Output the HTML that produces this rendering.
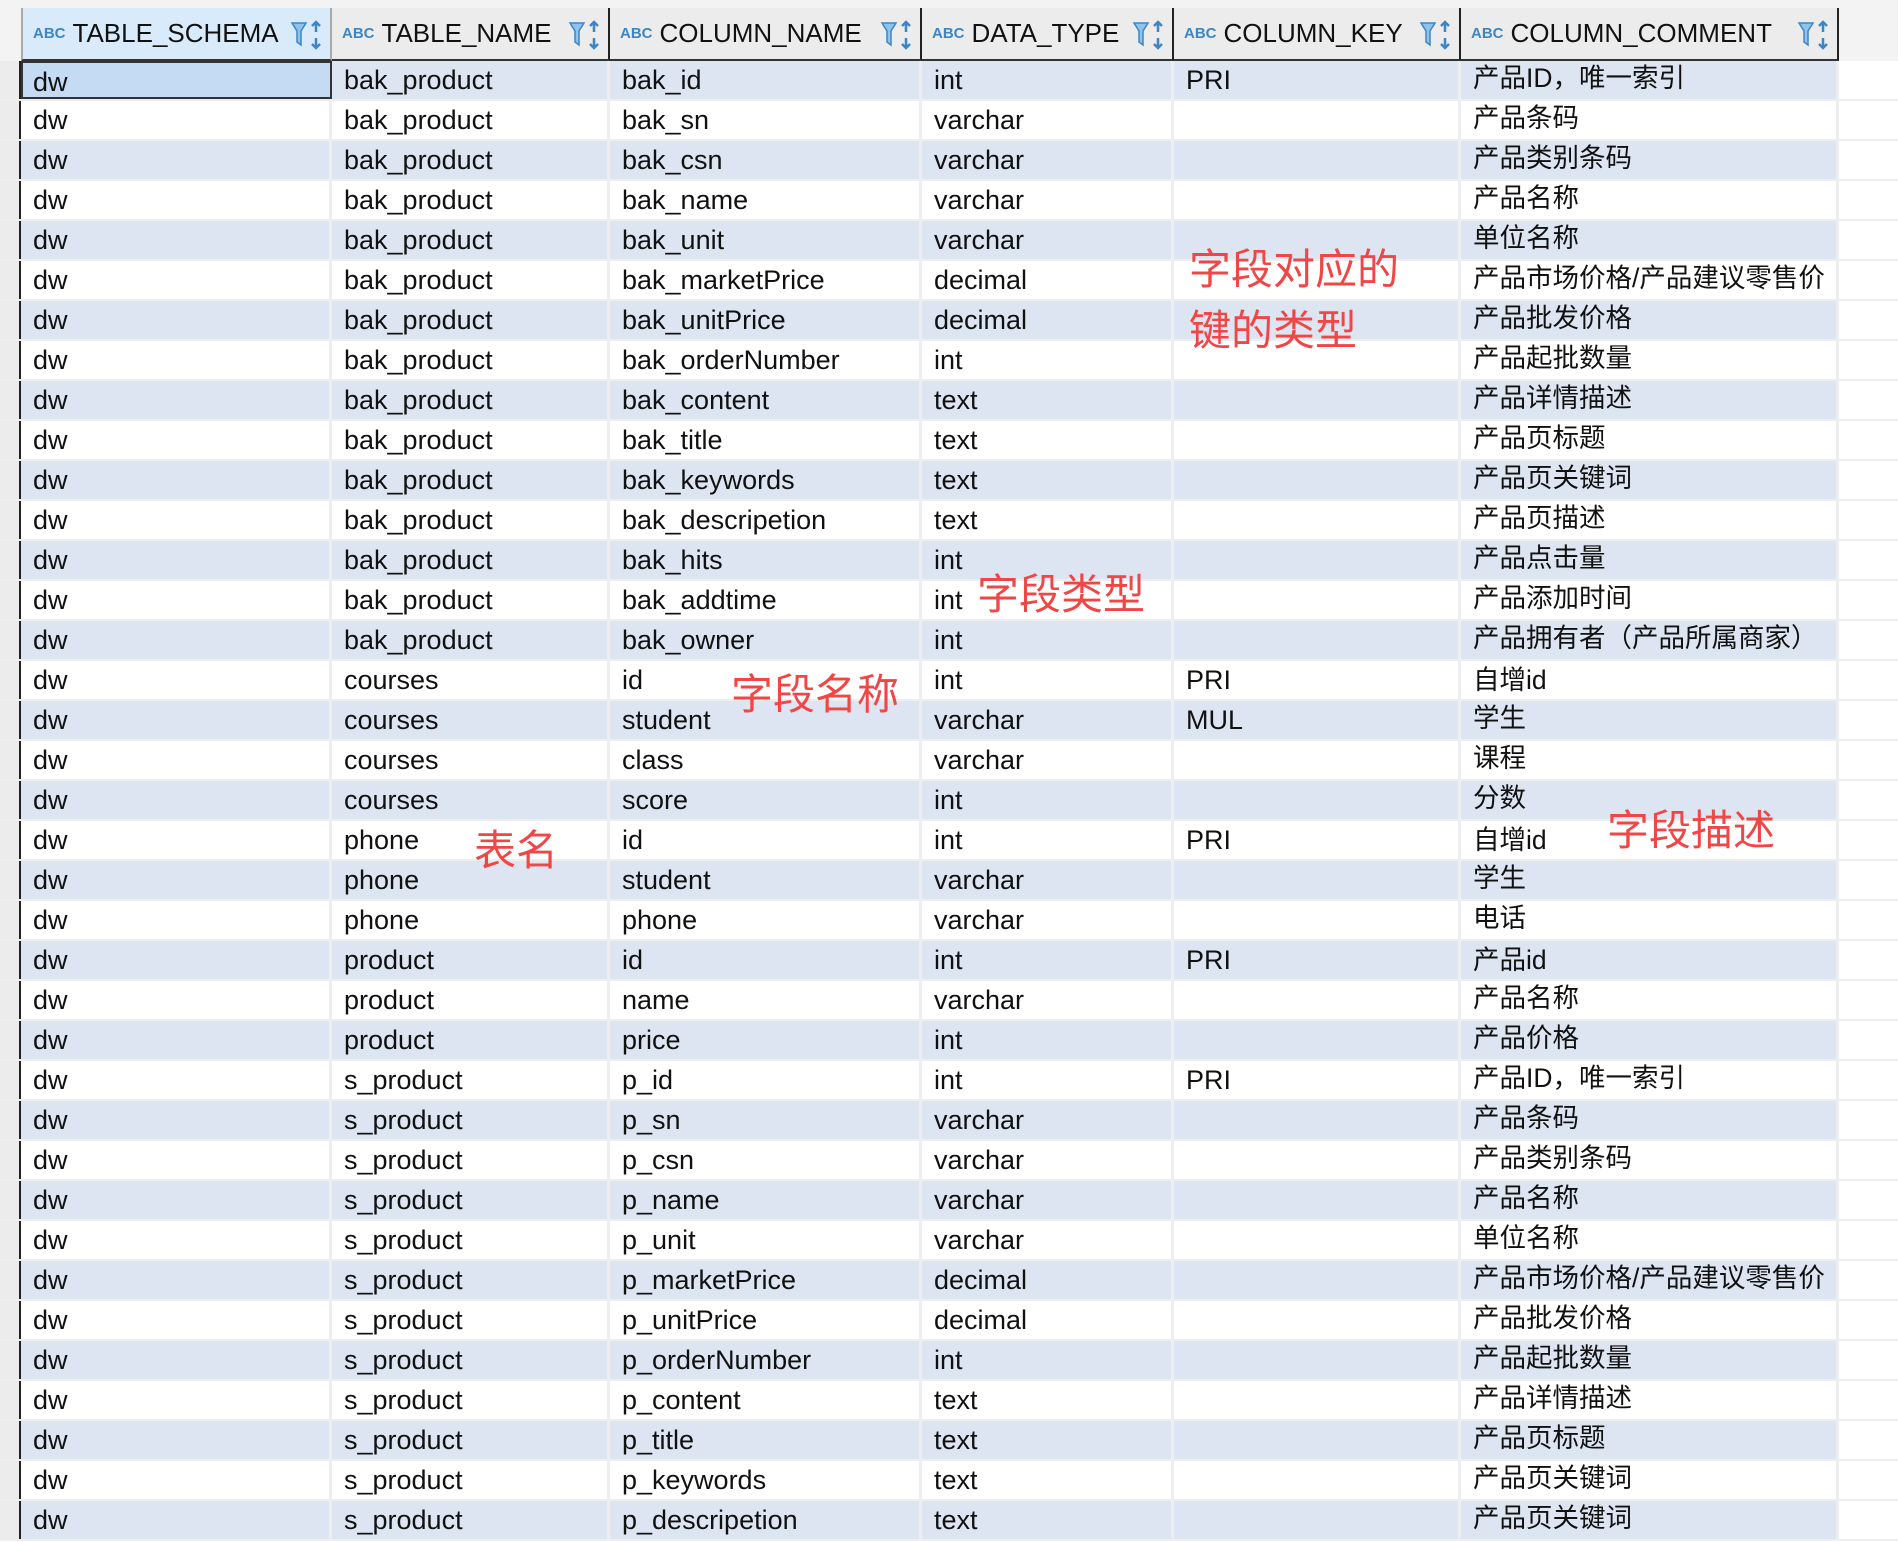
<!DOCTYPE html>
<html><head><meta charset="utf-8">
<style>
*{margin:0;padding:0;box-sizing:border-box}
body{width:1898px;height:1542px;overflow:hidden;background:#fff;font-family:"Liberation Sans","Noto Sans CJK SC",sans-serif;font-size:27px;color:#111;position:relative}
.hdr{position:absolute;left:0;top:0;width:1898px;height:61px;background:#f3f3f3}
.hc{position:absolute;top:8px;height:53px;background:#ececec;border-right:2px solid #222;border-bottom:2px solid #333;display:flex;align-items:center;padding-left:10px;font-size:26px}
.hc .t{font-size:15px;font-weight:bold;color:#3d86c6;margin-right:7px;letter-spacing:0}
.hc svg{position:absolute;right:6px;top:12px}
.row{position:absolute;left:0;width:1898px;height:40px;display:flex}
.row div{height:38px;line-height:38px;padding-left:12px;white-space:nowrap;border-right:3px solid #eeeeee;flex:none}
.row .g{width:21px;padding:0;background:#ececec;border-right:2px solid #222}
.row .e{width:59px;border:none;background:#fff}
.row{border-bottom:2px solid #eeeeee}
.a div{background:#dce5f1}
.b div{background:#fff}
.c1{width:311px}.c2{width:278px}.c3{width:312px}.c4{width:252px}.c5{width:287px}.c6{width:378px}
.c6{font-size:26.5px}
.cm{line-height:34px !important}
.an{position:absolute;color:#f04646;font-size:42px;font-family:"Noto Sans CJK SC",sans-serif;line-height:1}
</style></head><body>
<div class="hdr"></div>
<div class="hc" style="left:21px;width:311px;background:#d9eafb;border-left:2px solid #aaa;border-right:2px solid #aaa"><span class="t">ABC</span>TABLE_SCHEMA<svg width="34" height="30" viewBox="0 0 34 30"><path d="M2 3h14l-5 8v14l-4-3V11z" fill="#8fc3ea" stroke="#3d86c6" stroke-width="1.5"/><path d="M26 2v10M22 6l4-4 4 4M26 18v10M22 24l4 4 4-4" stroke="#3d86c6" stroke-width="2.5" fill="none"/></svg></div>
<div class="hc" style="left:332px;width:278px"><span class="t">ABC</span>TABLE_NAME<svg width="34" height="30" viewBox="0 0 34 30"><path d="M2 3h14l-5 8v14l-4-3V11z" fill="#8fc3ea" stroke="#3d86c6" stroke-width="1.5"/><path d="M26 2v10M22 6l4-4 4 4M26 18v10M22 24l4 4 4-4" stroke="#3d86c6" stroke-width="2.5" fill="none"/></svg></div>
<div class="hc" style="left:610px;width:312px"><span class="t">ABC</span>COLUMN_NAME<svg width="34" height="30" viewBox="0 0 34 30"><path d="M2 3h14l-5 8v14l-4-3V11z" fill="#8fc3ea" stroke="#3d86c6" stroke-width="1.5"/><path d="M26 2v10M22 6l4-4 4 4M26 18v10M22 24l4 4 4-4" stroke="#3d86c6" stroke-width="2.5" fill="none"/></svg></div>
<div class="hc" style="left:922px;width:252px"><span class="t">ABC</span>DATA_TYPE<svg width="34" height="30" viewBox="0 0 34 30"><path d="M2 3h14l-5 8v14l-4-3V11z" fill="#8fc3ea" stroke="#3d86c6" stroke-width="1.5"/><path d="M26 2v10M22 6l4-4 4 4M26 18v10M22 24l4 4 4-4" stroke="#3d86c6" stroke-width="2.5" fill="none"/></svg></div>
<div class="hc" style="left:1174px;width:287px"><span class="t">ABC</span>COLUMN_KEY<svg width="34" height="30" viewBox="0 0 34 30"><path d="M2 3h14l-5 8v14l-4-3V11z" fill="#8fc3ea" stroke="#3d86c6" stroke-width="1.5"/><path d="M26 2v10M22 6l4-4 4 4M26 18v10M22 24l4 4 4-4" stroke="#3d86c6" stroke-width="2.5" fill="none"/></svg></div>
<div class="hc" style="left:1461px;width:378px"><span class="t">ABC</span>COLUMN_COMMENT<svg width="34" height="30" viewBox="0 0 34 30"><path d="M2 3h14l-5 8v14l-4-3V11z" fill="#8fc3ea" stroke="#3d86c6" stroke-width="1.5"/><path d="M26 2v10M22 6l4-4 4 4M26 18v10M22 24l4 4 4-4" stroke="#3d86c6" stroke-width="2.5" fill="none"/></svg></div>

<div class="row a" style="top:61px"><div class="g"></div><div class="c1" style="background:#c5dbf3;border:2px solid #333;padding-left:10px">dw</div><div class="c2">bak_product</div><div class="c3">bak_id</div><div class="c4">int</div><div class="c5">PRI</div><div class="c6 cm">产品ID，唯一索引</div><div class="e"></div></div>
<div class="row b" style="top:101px"><div class="g"></div><div class="c1">dw</div><div class="c2">bak_product</div><div class="c3">bak_sn</div><div class="c4">varchar</div><div class="c5"></div><div class="c6 cm">产品条码</div><div class="e"></div></div>
<div class="row a" style="top:141px"><div class="g"></div><div class="c1">dw</div><div class="c2">bak_product</div><div class="c3">bak_csn</div><div class="c4">varchar</div><div class="c5"></div><div class="c6 cm">产品类别条码</div><div class="e"></div></div>
<div class="row b" style="top:181px"><div class="g"></div><div class="c1">dw</div><div class="c2">bak_product</div><div class="c3">bak_name</div><div class="c4">varchar</div><div class="c5"></div><div class="c6 cm">产品名称</div><div class="e"></div></div>
<div class="row a" style="top:221px"><div class="g"></div><div class="c1">dw</div><div class="c2">bak_product</div><div class="c3">bak_unit</div><div class="c4">varchar</div><div class="c5"></div><div class="c6 cm">单位名称</div><div class="e"></div></div>
<div class="row b" style="top:261px"><div class="g"></div><div class="c1">dw</div><div class="c2">bak_product</div><div class="c3">bak_marketPrice</div><div class="c4">decimal</div><div class="c5"></div><div class="c6 cm">产品市场价格/产品建议零售价</div><div class="e"></div></div>
<div class="row a" style="top:301px"><div class="g"></div><div class="c1">dw</div><div class="c2">bak_product</div><div class="c3">bak_unitPrice</div><div class="c4">decimal</div><div class="c5"></div><div class="c6 cm">产品批发价格</div><div class="e"></div></div>
<div class="row b" style="top:341px"><div class="g"></div><div class="c1">dw</div><div class="c2">bak_product</div><div class="c3">bak_orderNumber</div><div class="c4">int</div><div class="c5"></div><div class="c6 cm">产品起批数量</div><div class="e"></div></div>
<div class="row a" style="top:381px"><div class="g"></div><div class="c1">dw</div><div class="c2">bak_product</div><div class="c3">bak_content</div><div class="c4">text</div><div class="c5"></div><div class="c6 cm">产品详情描述</div><div class="e"></div></div>
<div class="row b" style="top:421px"><div class="g"></div><div class="c1">dw</div><div class="c2">bak_product</div><div class="c3">bak_title</div><div class="c4">text</div><div class="c5"></div><div class="c6 cm">产品页标题</div><div class="e"></div></div>
<div class="row a" style="top:461px"><div class="g"></div><div class="c1">dw</div><div class="c2">bak_product</div><div class="c3">bak_keywords</div><div class="c4">text</div><div class="c5"></div><div class="c6 cm">产品页关键词</div><div class="e"></div></div>
<div class="row b" style="top:501px"><div class="g"></div><div class="c1">dw</div><div class="c2">bak_product</div><div class="c3">bak_descripetion</div><div class="c4">text</div><div class="c5"></div><div class="c6 cm">产品页描述</div><div class="e"></div></div>
<div class="row a" style="top:541px"><div class="g"></div><div class="c1">dw</div><div class="c2">bak_product</div><div class="c3">bak_hits</div><div class="c4">int</div><div class="c5"></div><div class="c6 cm">产品点击量</div><div class="e"></div></div>
<div class="row b" style="top:581px"><div class="g"></div><div class="c1">dw</div><div class="c2">bak_product</div><div class="c3">bak_addtime</div><div class="c4">int</div><div class="c5"></div><div class="c6 cm">产品添加时间</div><div class="e"></div></div>
<div class="row a" style="top:621px"><div class="g"></div><div class="c1">dw</div><div class="c2">bak_product</div><div class="c3">bak_owner</div><div class="c4">int</div><div class="c5"></div><div class="c6 cm">产品拥有者（产品所属商家）</div><div class="e"></div></div>
<div class="row b" style="top:661px"><div class="g"></div><div class="c1">dw</div><div class="c2">courses</div><div class="c3">id</div><div class="c4">int</div><div class="c5">PRI</div><div class="c6">自增id</div><div class="e"></div></div>
<div class="row a" style="top:701px"><div class="g"></div><div class="c1">dw</div><div class="c2">courses</div><div class="c3">student</div><div class="c4">varchar</div><div class="c5">MUL</div><div class="c6 cm">学生</div><div class="e"></div></div>
<div class="row b" style="top:741px"><div class="g"></div><div class="c1">dw</div><div class="c2">courses</div><div class="c3">class</div><div class="c4">varchar</div><div class="c5"></div><div class="c6 cm">课程</div><div class="e"></div></div>
<div class="row a" style="top:781px"><div class="g"></div><div class="c1">dw</div><div class="c2">courses</div><div class="c3">score</div><div class="c4">int</div><div class="c5"></div><div class="c6 cm">分数</div><div class="e"></div></div>
<div class="row b" style="top:821px"><div class="g"></div><div class="c1">dw</div><div class="c2">phone</div><div class="c3">id</div><div class="c4">int</div><div class="c5">PRI</div><div class="c6">自增id</div><div class="e"></div></div>
<div class="row a" style="top:861px"><div class="g"></div><div class="c1">dw</div><div class="c2">phone</div><div class="c3">student</div><div class="c4">varchar</div><div class="c5"></div><div class="c6 cm">学生</div><div class="e"></div></div>
<div class="row b" style="top:901px"><div class="g"></div><div class="c1">dw</div><div class="c2">phone</div><div class="c3">phone</div><div class="c4">varchar</div><div class="c5"></div><div class="c6 cm">电话</div><div class="e"></div></div>
<div class="row a" style="top:941px"><div class="g"></div><div class="c1">dw</div><div class="c2">product</div><div class="c3">id</div><div class="c4">int</div><div class="c5">PRI</div><div class="c6">产品id</div><div class="e"></div></div>
<div class="row b" style="top:981px"><div class="g"></div><div class="c1">dw</div><div class="c2">product</div><div class="c3">name</div><div class="c4">varchar</div><div class="c5"></div><div class="c6 cm">产品名称</div><div class="e"></div></div>
<div class="row a" style="top:1021px"><div class="g"></div><div class="c1">dw</div><div class="c2">product</div><div class="c3">price</div><div class="c4">int</div><div class="c5"></div><div class="c6 cm">产品价格</div><div class="e"></div></div>
<div class="row b" style="top:1061px"><div class="g"></div><div class="c1">dw</div><div class="c2">s_product</div><div class="c3">p_id</div><div class="c4">int</div><div class="c5">PRI</div><div class="c6 cm">产品ID，唯一索引</div><div class="e"></div></div>
<div class="row a" style="top:1101px"><div class="g"></div><div class="c1">dw</div><div class="c2">s_product</div><div class="c3">p_sn</div><div class="c4">varchar</div><div class="c5"></div><div class="c6 cm">产品条码</div><div class="e"></div></div>
<div class="row b" style="top:1141px"><div class="g"></div><div class="c1">dw</div><div class="c2">s_product</div><div class="c3">p_csn</div><div class="c4">varchar</div><div class="c5"></div><div class="c6 cm">产品类别条码</div><div class="e"></div></div>
<div class="row a" style="top:1181px"><div class="g"></div><div class="c1">dw</div><div class="c2">s_product</div><div class="c3">p_name</div><div class="c4">varchar</div><div class="c5"></div><div class="c6 cm">产品名称</div><div class="e"></div></div>
<div class="row b" style="top:1221px"><div class="g"></div><div class="c1">dw</div><div class="c2">s_product</div><div class="c3">p_unit</div><div class="c4">varchar</div><div class="c5"></div><div class="c6 cm">单位名称</div><div class="e"></div></div>
<div class="row a" style="top:1261px"><div class="g"></div><div class="c1">dw</div><div class="c2">s_product</div><div class="c3">p_marketPrice</div><div class="c4">decimal</div><div class="c5"></div><div class="c6 cm">产品市场价格/产品建议零售价</div><div class="e"></div></div>
<div class="row b" style="top:1301px"><div class="g"></div><div class="c1">dw</div><div class="c2">s_product</div><div class="c3">p_unitPrice</div><div class="c4">decimal</div><div class="c5"></div><div class="c6 cm">产品批发价格</div><div class="e"></div></div>
<div class="row a" style="top:1341px"><div class="g"></div><div class="c1">dw</div><div class="c2">s_product</div><div class="c3">p_orderNumber</div><div class="c4">int</div><div class="c5"></div><div class="c6 cm">产品起批数量</div><div class="e"></div></div>
<div class="row b" style="top:1381px"><div class="g"></div><div class="c1">dw</div><div class="c2">s_product</div><div class="c3">p_content</div><div class="c4">text</div><div class="c5"></div><div class="c6 cm">产品详情描述</div><div class="e"></div></div>
<div class="row a" style="top:1421px"><div class="g"></div><div class="c1">dw</div><div class="c2">s_product</div><div class="c3">p_title</div><div class="c4">text</div><div class="c5"></div><div class="c6 cm">产品页标题</div><div class="e"></div></div>
<div class="row b" style="top:1461px"><div class="g"></div><div class="c1">dw</div><div class="c2">s_product</div><div class="c3">p_keywords</div><div class="c4">text</div><div class="c5"></div><div class="c6 cm">产品页关键词</div><div class="e"></div></div>
<div class="row a" style="top:1501px"><div class="g"></div><div class="c1">dw</div><div class="c2">s_product</div><div class="c3">p_descripetion</div><div class="c4">text</div><div class="c5"></div><div class="c6 cm">产品页关键词</div><div class="e"></div></div>

<div class="an" style="left:1189px;top:246px">字段对应的</div>
<div class="an" style="left:1189px;top:307px">键的类型</div>
<div class="an" style="left:977px;top:571px">字段类型</div>
<div class="an" style="left:731px;top:671px">字段名称</div>
<div class="an" style="left:474px;top:827px">表名</div>
<div class="an" style="left:1607px;top:807px">字段描述</div>
</body></html>
